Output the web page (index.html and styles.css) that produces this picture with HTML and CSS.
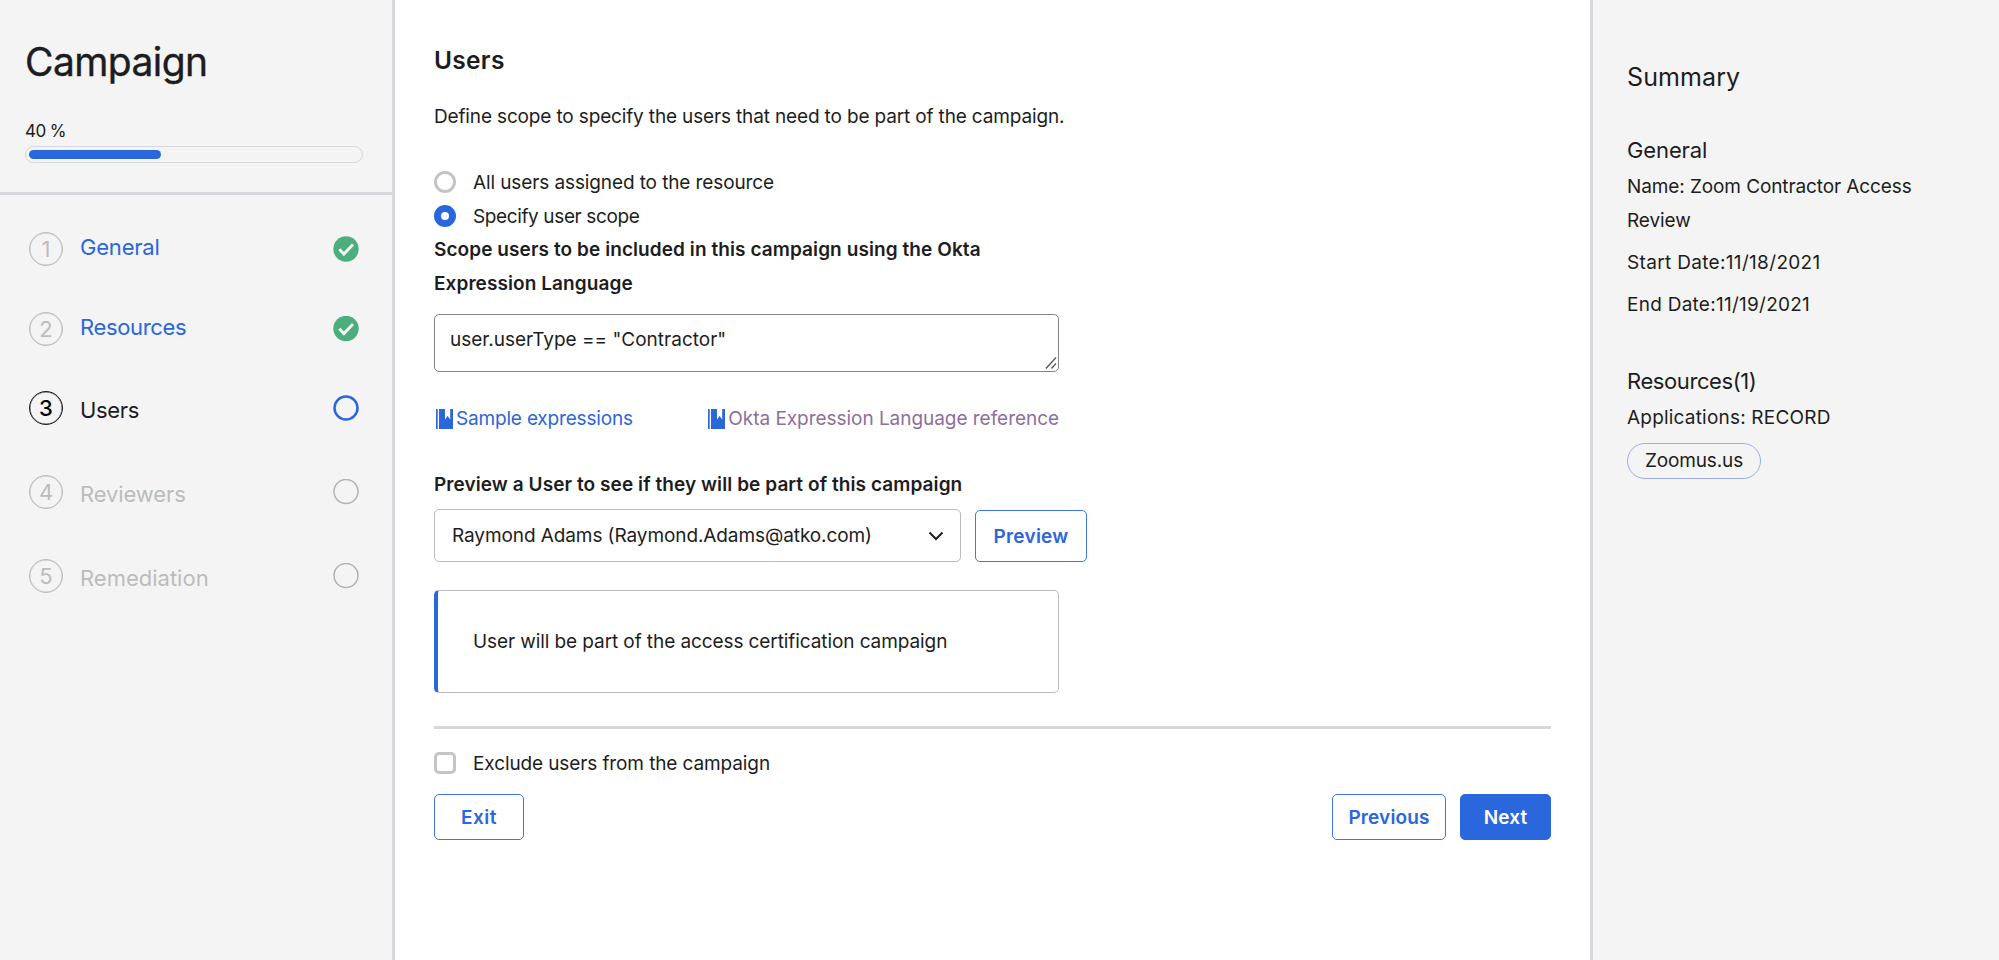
FILE: index.html
```html
<!DOCTYPE html>
<html lang="en">
<head>
<meta charset="utf-8">
<title>Campaign</title>
<link rel="stylesheet" href="styles.css">
</head>
<body>
<div class="layout">
  <aside class="wizard">
    <header class="wizard-head">
      <h1>Campaign</h1>
      <div class="percent">40 %</div>
      <div class="track"><div class="fill" style="width:40%"></div></div>
    </header>
    <ol class="steps">
      <li class="step done"><span class="num">1</span><a class="name ls-a">General</a>
        <svg class="status" viewBox="0 0 26 26"><circle cx="13" cy="13" r="12.7" fill="#4cae7c"/><path d="M6.3 13.3l4.6 4.8L20 8.6" fill="none" stroke="#f4f4f4" stroke-width="2.9"/></svg></li>
      <li class="step done"><span class="num">2</span><a class="name ls-b">Resources</a>
        <svg class="status" viewBox="0 0 26 26"><circle cx="13" cy="12.5" r="12.7" fill="#4cae7c"/><path d="M6.3 12.8l4.6 4.8L20 8.1" fill="none" stroke="#f4f4f4" stroke-width="2.9"/></svg></li>
      <li class="step current"><span class="num">3</span><span class="name ls-b">Users</span>
        <svg class="status" viewBox="0 0 26 26"><circle cx="13" cy="13" r="11.5" fill="none" stroke="#2a66dc" stroke-width="2.5"/></svg></li>
      <li class="step"><span class="num">4</span><span class="name ls-c">Reviewers</span>
        <svg class="status" viewBox="0 0 26 26"><circle cx="13" cy="12.5" r="12" fill="none" stroke="#adb3b8" stroke-width="1.5"/></svg></li>
      <li class="step"><span class="num">5</span><span class="name">Remediation</span>
        <svg class="status" viewBox="0 0 26 26"><circle cx="13" cy="12.5" r="12" fill="none" stroke="#adb3b8" stroke-width="1.5"/></svg></li>
    </ol>
  </aside>

  <main class="content">
    <h2>Users</h2>
    <p class="lead">Define scope to specify the users that need to be part of the campaign.</p>
    <div class="option"><span class="radio"></span><span class="opt">All users assigned to the resource</span></div>
    <div class="option"><span class="radio checked"></span><span class="opt opt-scope">Specify user scope</span></div>
    <div class="label">Scope users to be included in this campaign using the Okta<br>Expression Language</div>
    <div class="expression">
      <span>user.userType == "Contractor"</span>
      <svg class="grip" viewBox="0 0 12 14"><path d="M1 12.5L11 1.5M6.5 12.5L11 7.5" fill="none" stroke="#55555c" stroke-width="1.3"/></svg>
    </div>
    <div class="links">
      <a class="link sample"><svg class="book" viewBox="0 0 17 20"><path d="M0 0h1.7v20H0zM3 0h6v10.5l2.6-3.6 2.6 3.6V0H17v20H3z" fill="#2a66dc"/></svg><span>Sample expressions</span></a>
      <a class="link visited"><svg class="book" viewBox="0 0 17 20"><path d="M0 0h1.7v20H0zM3 0h6v10.5l2.6-3.6 2.6 3.6V0H17v20H3z" fill="#2a66dc"/></svg><span>Okta Expression Language reference</span></a>
    </div>
    <div class="label preview-label">Preview a User to see if they will be part of this campaign</div>
    <div class="preview-row">
      <div class="select"><span>Raymond Adams (Raymond.Adams@atko.com)</span>
        <svg class="chevron" viewBox="0 0 16 10"><path d="M1.5 1.5L8 8l6.5-6.5" fill="none" stroke="#1d1d21" stroke-width="2"/></svg></div>
      <button class="btn preview">Preview</button>
    </div>
    <div class="notice">User will be part of the access certification campaign</div>
    <hr>
    <div class="option"><span class="checkbox"></span><span class="opt">Exclude users from the campaign</span></div>
    <div class="actions">
      <button class="btn exit">Exit</button>
      <button class="btn previous">Previous</button>
      <button class="btn next">Next</button>
    </div>
  </main>

  <aside class="summary">
    <h2>Summary</h2>
    <h3>General</h3>
    <p class="campaign-name">Name: Zoom Contractor Access<br>Review</p>
    <p class="start-date">Start Date:11/18/2021</p>
    <p class="end-date">End Date:11/19/2021</p>
    <h3 class="resources">Resources(1)</h3>
    <p class="apps">Applications: RECORD</p>
    <span class="pill">Zoomus.us</span>
  </aside>
</div>
</body>
</html>
```
FILE: styles.css
```css
* { box-sizing: border-box; }
body {
  margin: 0;
  font: 400 19px/34px Inter, "Liberation Sans", sans-serif;
  color: #1d1d21;
  background: #fff;
}
h1, h2, h3, p, ol { margin: 0; padding: 0; font-weight: 400; }
.layout {
  display: grid;
  grid-template-columns: 395px 1fr 409px;
  height: 960px;
  overflow: hidden;
}

/* Wizard navigation */
.wizard { background: #f4f4f4; border-right: 3px solid #d7d7dc; }
.wizard-head {
  height: 195px;
  padding: 38px 29px 0 25px;
  border-bottom: 3px solid #d7d7dc;
}
h1 { font-size: 39px; line-height: 48px; letter-spacing: -0.58px; -webkit-text-stroke: 0.4px #1d1d21; }
.percent { margin-top: 33px; font-size: 17px; line-height: 24px; letter-spacing: -0.6px; }
.track {
  height: 17px;
  margin-top: 3px;
  padding: 3px;
  border: 1px solid #d7d7dc;
  border-radius: 9px;
}
.fill { height: 9px; border-radius: 5px; background: #2a66dc; }
.steps { list-style: none; padding: 37px 33px 0 29px; }
.step {
  display: flex;
  align-items: center;
  height: 34px;
  margin-bottom: 50px;
  font-size: 22px;
  color: #bcbcbc;
}
.num {
  width: 34px;
  height: 34px;
  line-height: 32px;
  margin-right: 17px;
  border: 1px solid #bcbcbc;
  border-radius: 50%;
  box-shadow: inset 0 0 0 0.5px #c3c3c3;
  text-align: center;
}
.name { flex: 1; padding-top: 4px; }
.status { width: 26px; height: 26px; }
.done { margin-bottom: 46px; }
.done + .done { margin-bottom: 45px; }
.done .name { color: #2a66dc; padding: 0 0 4px; }
.current { color: #1d1d21; }
.current .num { border-color: #1d1d21; color: #000; font-weight: 500; box-shadow: inset 0 0 0 0.5px #55555c; }
.ls-a { letter-spacing: -0.2px; }
.ls-b { letter-spacing: -0.36px; }
.ls-c { letter-spacing: -0.1px; }

/* Main form */
.content { padding: 44px 39px 0; }
.content h2 { font-size: 24.5px; line-height: 32px; font-weight: 600; letter-spacing: 0.3px; }
.lead { margin: 24px 0 31px; letter-spacing: -0.15px; }
.option { display: flex; align-items: center; gap: 17px; height: 34px; letter-spacing: -0.11px; }
.opt { padding-top: 2px; }
.opt-scope { letter-spacing: -0.38px; }
.radio, .checkbox { width: 22px; height: 22px; border: 3px solid #c3c3c9; border-radius: 50%; background: #fff; }
.radio.checked { border: 7px solid #2a66dc; }
.checkbox { border-radius: 5px; }
.label { font-weight: 600; letter-spacing: 0.08px; }
.expression {
  position: relative;
  width: 625px;
  height: 58px;
  margin-top: 13px;
  padding: 8px 15px;
  border: 1px solid #84848e;
  border-radius: 5px;
}
.grip { position: absolute; right: 1px; bottom: 1px; width: 12px; height: 14px; }
.links {
  display: flex;
  justify-content: space-between;
  width: 625px;
  margin-top: 29px;
  padding-left: 2px;
}
.link { display: flex; align-items: center; gap: 3px; color: #2a66dc; }
.link span { padding-top: 1px; }
.sample { letter-spacing: -0.18px; }
.visited { color: #8c6f9d; letter-spacing: -0.04px; }
.book { width: 17px; height: 20px; }
.preview-label { margin-top: 32px; }
.preview-row { display: flex; align-items: flex-end; gap: 14px; margin-top: 7px; }
.select {
  display: flex;
  align-items: center;
  justify-content: space-between;
  width: 527px;
  height: 53px;
  padding: 0 16px 0 17px;
  border: 1px solid #bbbbc2;
  border-radius: 5px;
  letter-spacing: -0.09px;
}
.chevron { width: 16px; height: 10px; }
.btn {
  height: 46px;
  padding: 1px 0 0;
  border: 1px solid #3f76e1;
  border-radius: 5px;
  background: #fff;
  color: #2a66dc;
  font: 600 19px/34px Inter, "Liberation Sans", sans-serif;
  letter-spacing: 0.15px;
}
.preview { width: 112px; height: 52px; letter-spacing: 0.25px; }
.notice {
  width: 625px;
  height: 103px;
  margin-top: 28px;
  padding: 34px 34px 34px 35px;
  border: 1px solid #bbbbc2;
  border-left: 4px solid #2a66dc;
  border-radius: 5px;
  letter-spacing: -0.09px;
}
hr { height: 3px; margin: 33px 0 17px; border: 0; background: #d7d7dc; }
.actions { display: flex; margin-top: 14px; }
.exit { width: 90px; margin-right: auto; letter-spacing: 0.5px; }
.previous { width: 114px; margin-right: 14px; }
.next { width: 91px; background: #2a66dc; border-color: #2a66dc; color: #fff; }

/* Summary panel */
.summary { padding: 61px 34px 0; background: #f4f4f4; border-left: 3px solid #d7d7dc; }
.summary h2 { font-size: 25px; line-height: 32px; letter-spacing: 0.1px; }
.summary h3 { margin-top: 43px; font-size: 22px; line-height: 28px; letter-spacing: -0.12px; }
.summary p { margin-top: 6px; }
.summary .campaign-name { letter-spacing: -0.1px; }
.summary .start-date, .summary .end-date { margin-top: 8px; letter-spacing: 0.33px; }
.summary .end-date { letter-spacing: 0.26px; }
.summary .resources { margin-top: 45px; letter-spacing: -0.41px; }
.summary .apps { letter-spacing: 0.2px; }
.pill {
  display: inline-block;
  height: 36px;
  margin-top: 8px;
  padding: 0 17px;
  border: 1px solid #9cacee;
  border-radius: 18px;
  letter-spacing: -0.15px;
}
```
